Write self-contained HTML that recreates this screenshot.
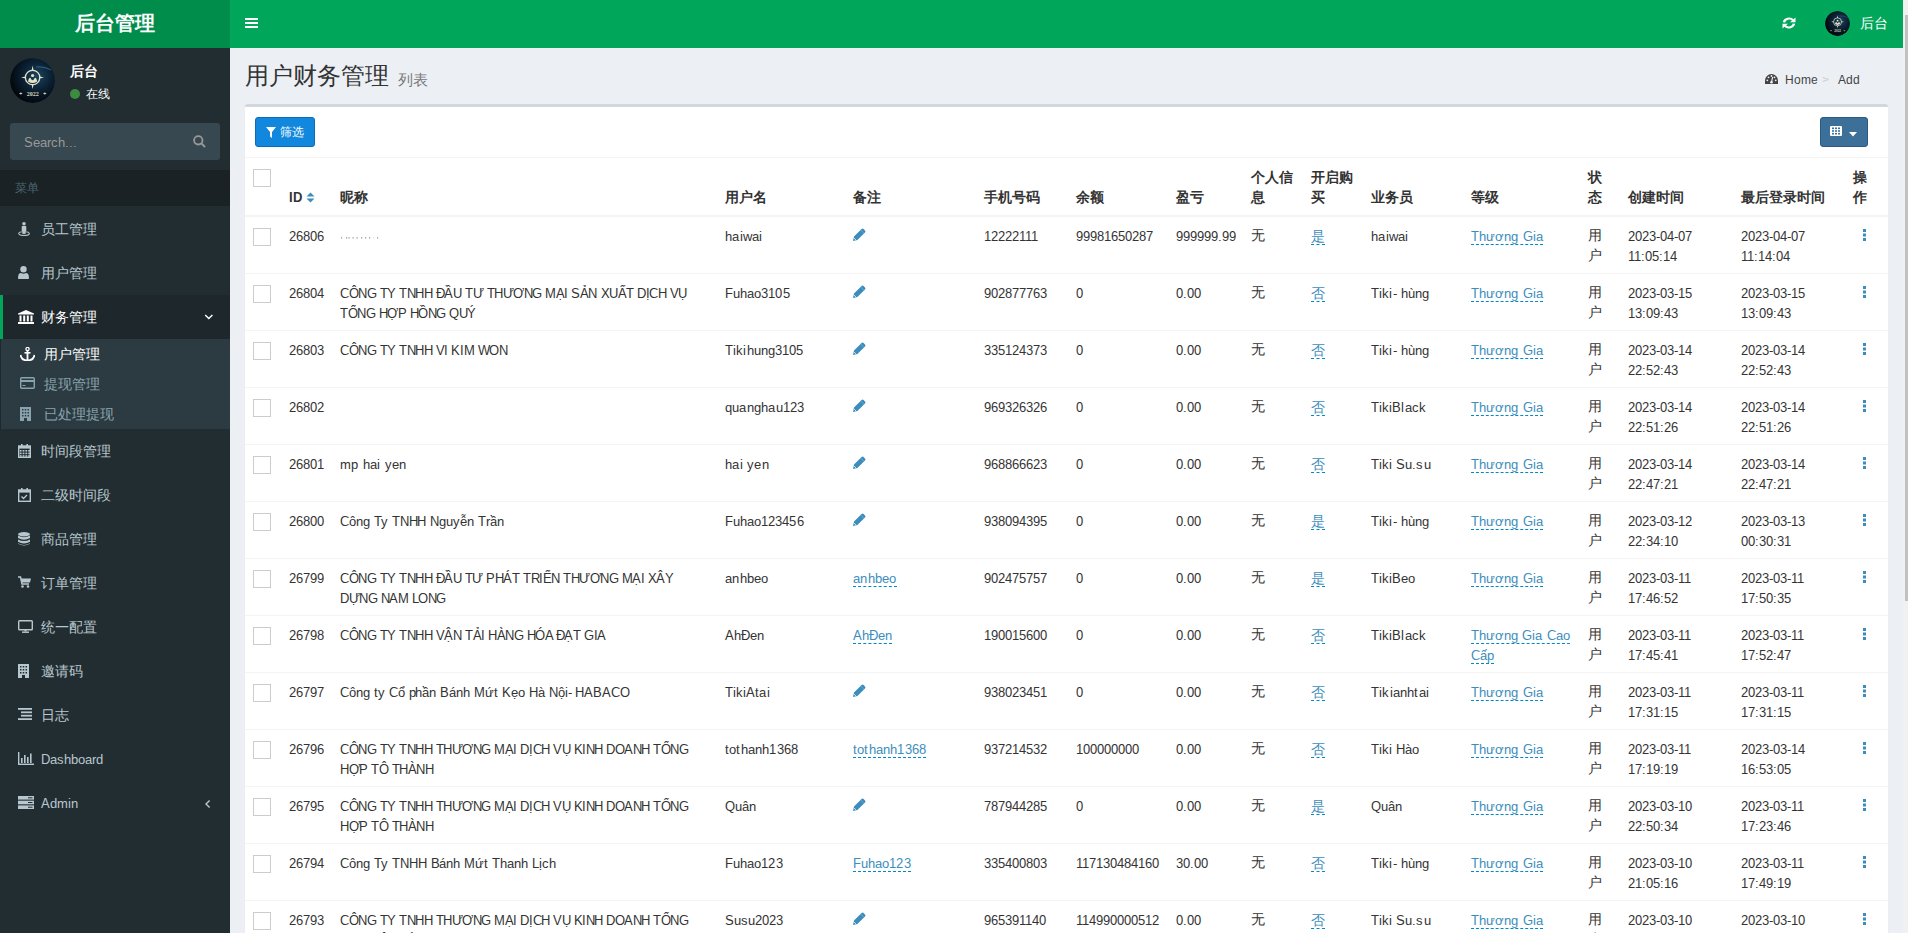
<!DOCTYPE html>
<html><head><meta charset="utf-8">
<style>
@font-face{font-family:"LSA";src:local("Liberation Sans");font-weight:400;size-adjust:90%;}
@font-face{font-family:"LSA";src:local("Liberation Sans Bold");font-weight:700;size-adjust:90%;}
html,body{margin:0;padding:0;width:1908px;height:933px;overflow:hidden;}
body{font-family:"LSA","Liberation Sans",sans-serif;font-size:14px;line-height:20px;color:#333;background:#ecf0f5;position:relative;}
a{text-decoration:none;}
.hdr-logo{position:absolute;left:0;top:0;width:230px;height:48px;background:#008d4c;color:#fff;font-size:20px;font-weight:bold;text-align:center;line-height:48px;}
.hdr-nav{position:absolute;left:230px;top:0;width:1673px;height:48px;background:#00a65a;}
.sb{position:absolute;left:0;top:48px;width:230px;height:885px;background:#222d32;}
.scroll{position:absolute;left:1903px;top:0;width:5px;height:933px;background:#f1f1f1;}
.thumb{position:absolute;left:2px;top:15px;width:3px;height:586px;background:#c1c1c1;}
.avatar{position:absolute;border-radius:50%;overflow:hidden;line-height:0;}
.uname{position:absolute;left:70px;top:60px;color:#fff;font-weight:bold;font-size:14px;}
.ustat{position:absolute;left:70px;top:83px;color:#fff;font-size:12px;}
.ustat i{display:inline-block;width:10px;height:10px;border-radius:50%;background:#3d8b40;vertical-align:-1px;margin-right:6px;}
.search{position:absolute;left:10px;top:123px;width:210px;height:37px;background:#374850;border-radius:3px;}
.search span{position:absolute;left:14px;top:10px;color:#999;font-size:14px;}
.sbh{position:absolute;left:0;top:170px;width:230px;height:36px;background:#1a2226;color:#4b646f;font-size:12px;line-height:36px;}
.sbh span{padding-left:15px;}
.mi{position:absolute;left:0;width:230px;height:44px;color:#b8c7ce;font-size:14px;line-height:44px;}
.mi .ic{position:absolute;left:18px;top:0;width:14px;height:44px;}
.mi .ic svg{position:absolute;left:0;top:15px;}
.mi .tx{position:absolute;left:41px;top:1px;}
.mi .tx.lat{top:1px;font-size:14.4px;}
.mi.act{background:#1e282c;color:#fff;border-left:3px solid #00a65a;width:227px;}
.mi.act .ic{left:15px}
.mi.act .tx{left:38px}
.tree{position:absolute;left:0;top:339px;width:230px;height:90px;background:#2c3b41;box-shadow:inset 1px 0 0 #1e282c;}
.si{position:absolute;left:0;width:230px;height:30px;line-height:30px;color:#8aa4af;font-size:14px;}
.si .ic{position:absolute;left:20px;top:0;width:16px;height:30px;}
.si .ic svg{position:absolute;left:0;top:8px;}
.si .tx{position:absolute;left:44px;top:1px;}
.si.act{color:#fff;}
.title{position:absolute;left:245px;top:62px;font-size:24px;line-height:30px;color:#333;}
.title small{font-size:15px;color:#777;padding-left:9px;position:relative;top:1px;}
.bc{position:absolute;left:1765px;top:71px;font-size:13px;line-height:17px;color:#444;}
.box{position:absolute;left:245px;top:104px;width:1643px;height:840px;background:#fff;border-top:3px solid #d2d6de;border-radius:3px;box-shadow:0 1px 1px rgba(0,0,0,.1);}
.btn1{position:absolute;left:10px;top:10px;width:58px;height:28px;background:#1188dd;border:1px solid #0a6db5;border-radius:3px;color:#fff;font-size:12px;line-height:28px;}
.btn2{position:absolute;left:1575px;top:10px;width:46px;height:28px;background:#3d7099;border:1px solid #2c5a80;border-radius:3px;}
table{position:absolute;left:0;top:50px;border-collapse:collapse;table-layout:fixed;width:1643px;}
td,th{padding:10px 8px 6px 8px;vertical-align:top;text-align:left;word-wrap:break-word;}
th{font-weight:bold;vertical-align:bottom;padding-bottom:7px;border-bottom:2px solid #f4f4f4;}
thead tr{border-top:1px solid #f4f4f4;}
tbody td{border-top:1px solid #f4f4f4;}
.cb{display:inline-block;width:16px;height:16px;border:1px solid #ccc;margin-top:1px;background:#fff;vertical-align:top;}
.ed{color:#3c8dbc;border-bottom:1px dashed #0088cc;}
.dots{color:#aab;font-size:10px;letter-spacing:-1px;}
.op{text-align:center;}
.up{position:relative;top:-1px;}
.op svg{margin-top:0px;position:relative;left:-3px;}
.pen{vertical-align:top;margin-top:1px;}
</style></head><body>
<div class="hdr-logo">后台管理</div>
<div class="hdr-nav">
  <svg style="position:absolute;left:15px;top:18px" width="13" height="10" viewBox="0 0 13 10"><rect x="0" y="0" width="13" height="2" fill="#fff"/><rect x="0" y="4" width="13" height="2" fill="#fff"/><rect x="0" y="8" width="13" height="2" fill="#fff"/></svg>
  <svg style="position:absolute;left:1552px;top:17px" width="14" height="12" viewBox="0 0 14 14" preserveAspectRatio="none"><path d="M2 6.3 A5.2 5.2 0 0 1 11 3.6" stroke="#fff" stroke-width="2.4" fill="none"/><path d="M13.5 0.5 L13.5 6 L8 6 Z" fill="#fff"/><path d="M12 7.7 A5.2 5.2 0 0 1 3 10.4" stroke="#fff" stroke-width="2.4" fill="none"/><path d="M0.5 13.5 L0.5 8 L6 8 Z" fill="#fff"/></svg>
  <div class="avatar" style="left:1595px;top:11px;width:25px;height:25px;"><svg width='25' height='25' viewBox='0 0 45 45'><defs><radialGradient id='agb' cx='60%' cy='40%' r='60%'><stop offset='0' stop-color='#1a4560'/><stop offset='0.5' stop-color='#0c2235'/><stop offset='1' stop-color='#03080e'/></radialGradient></defs><circle cx='22.5' cy='22.5' r='22.5' fill='url(#agb)'/><path d='M26 9 Q34 8 41 12' stroke='#3b6e8c' stroke-width='1.2' fill='none' opacity='0.7'/><circle cx='22.6' cy='19.5' r='7.2' fill='none' stroke='#e6e2c6' stroke-width='1.3'/><path d='M22.6 7.5 L23.6 12.5 L21.6 12.5 Z M22.6 31 L23.6 26.5 L21.6 26.5 Z M11 19.5 L15.5 18.5 L15.5 20.5 Z M34 19.5 L29.5 18.5 L29.5 20.5 Z' fill='#e6e2c6'/><path d='M18 23.5 Q19 19 20.5 20 Q22.6 24.5 24.7 20 Q26.2 19 27.2 23.5 Q22.6 26.5 18 23.5 Z' fill='#e6e2c6'/><circle cx='22.6' cy='17.5' r='1.6' fill='#e6e2c6'/><text x='22.8' y='37.5' text-anchor='middle' font-family='Liberation Serif' font-size='6' font-weight='bold' fill='#d8d4b8'>2022</text><path d='M9 35.5 L10.8 34.5 L12.6 35.5 L10.8 36.5 Z M33 35.5 L34.8 34.5 L36.6 35.5 L34.8 36.5 Z' fill='#d8d4b8'/></svg></div>
  <div style="position:absolute;left:1630px;top:14px;color:#fff;font-size:14px;">后台</div>
</div>
<div class="sb">
  <div class="avatar" style="left:10px;top:10px;width:45px;height:45px;"><svg width='45' height='45' viewBox='0 0 45 45'><defs><radialGradient id='aga' cx='60%' cy='40%' r='60%'><stop offset='0' stop-color='#1a4560'/><stop offset='0.5' stop-color='#0c2235'/><stop offset='1' stop-color='#03080e'/></radialGradient></defs><circle cx='22.5' cy='22.5' r='22.5' fill='url(#aga)'/><path d='M26 9 Q34 8 41 12' stroke='#3b6e8c' stroke-width='1.2' fill='none' opacity='0.7'/><circle cx='22.6' cy='19.5' r='7.2' fill='none' stroke='#e6e2c6' stroke-width='1.3'/><path d='M22.6 7.5 L23.6 12.5 L21.6 12.5 Z M22.6 31 L23.6 26.5 L21.6 26.5 Z M11 19.5 L15.5 18.5 L15.5 20.5 Z M34 19.5 L29.5 18.5 L29.5 20.5 Z' fill='#e6e2c6'/><path d='M18 23.5 Q19 19 20.5 20 Q22.6 24.5 24.7 20 Q26.2 19 27.2 23.5 Q22.6 26.5 18 23.5 Z' fill='#e6e2c6'/><circle cx='22.6' cy='17.5' r='1.6' fill='#e6e2c6'/><text x='22.8' y='37.5' text-anchor='middle' font-family='Liberation Serif' font-size='6' font-weight='bold' fill='#d8d4b8'>2022</text><path d='M9 35.5 L10.8 34.5 L12.6 35.5 L10.8 36.5 Z M33 35.5 L34.8 34.5 L36.6 35.5 L34.8 36.5 Z' fill='#d8d4b8'/></svg></div>
  <div class="uname" style="top:14px">后台</div>
  <div class="ustat" style="top:36px"><i></i>在线</div>
  <div class="search" style="top:75px"><span>Search...</span>
    <svg style="position:absolute;left:183px;top:12px" width="13" height="13" viewBox="0 0 13 13"><circle cx="5.3" cy="5.3" r="4.2" stroke="#999" stroke-width="1.8" fill="none"/><path d="M8.4 8.4 L12 12" stroke="#999" stroke-width="2"/></svg>
  </div>
  <div class="sbh" style="top:122px"><span>菜单</span></div>
  <div class='mi' style='top:159px'><span class='ic'><svg width='12' height='14' viewBox='0 0 12 14'><ellipse cx='6' cy='11.6' rx='5.3' ry='1.9' fill='none' stroke='#b8c7ce' stroke-width='1.1'/><circle cx='6' cy='1.8' r='1.8' fill='#b8c7ce'/><path d='M3.7 4.6 Q3.7 4 4.3 4 L7.7 4 Q8.3 4 8.3 4.6 L8.3 9 L7.5 9 L7.5 12 L4.5 12 L4.5 9 L3.7 9 Z' fill='#b8c7ce'/></svg></span><span class='tx'>员工管理</span></div>
<div class='mi' style='top:203px'><span class='ic'><svg width='11' height='13' viewBox='0 0 11 13'><circle cx='5.5' cy='3.3' r='3.2' fill='#b8c7ce'/><path d='M0 12.2 Q0 7 3 7 Q5.5 8.5 8 7 Q11 7 11 12.2 Q11 13 10.2 13 L0.8 13 Q0 13 0 12.2 Z' fill='#b8c7ce'/></svg></span><span class='tx'>用户管理</span></div>
<div class='mi' style='top:381px'><span class='ic'><svg width='13' height='14' viewBox='0 0 13 14'><rect x='0.7' y='2' width='11.6' height='11.3' fill='none' stroke='#b8c7ce' stroke-width='1.4'/><rect x='0.7' y='2' width='11.6' height='2.6' fill='#b8c7ce'/><rect x='3' y='0' width='1.6' height='3' fill='#b8c7ce'/><rect x='8.4' y='0' width='1.6' height='3' fill='#b8c7ce'/><rect x='1.8' y='6' width='1.8' height='1.6' fill='#b8c7ce'/><rect x='1.8' y='8.6' width='1.8' height='1.6' fill='#b8c7ce'/><rect x='1.8' y='11.2' width='1.8' height='1.6' fill='#b8c7ce'/><rect x='4.6' y='6' width='1.8' height='1.6' fill='#b8c7ce'/><rect x='4.6' y='8.6' width='1.8' height='1.6' fill='#b8c7ce'/><rect x='4.6' y='11.2' width='1.8' height='1.6' fill='#b8c7ce'/><rect x='7.4' y='6' width='1.8' height='1.6' fill='#b8c7ce'/><rect x='7.4' y='8.6' width='1.8' height='1.6' fill='#b8c7ce'/><rect x='7.4' y='11.2' width='1.8' height='1.6' fill='#b8c7ce'/><rect x='10.2' y='6' width='1.8' height='1.6' fill='#b8c7ce'/><rect x='10.2' y='8.6' width='1.8' height='1.6' fill='#b8c7ce'/><rect x='10.2' y='11.2' width='1.8' height='1.6' fill='#b8c7ce'/></svg></span><span class='tx'>时间段管理</span></div>
<div class='mi' style='top:425px'><span class='ic'><svg width='13' height='14' viewBox='0 0 13 14'><rect x='0.7' y='2' width='11.6' height='11.3' fill='none' stroke='#b8c7ce' stroke-width='1.4'/><rect x='0.7' y='2' width='11.6' height='2.6' fill='#b8c7ce'/><rect x='3' y='0' width='1.6' height='3' fill='#b8c7ce'/><rect x='8.4' y='0' width='1.6' height='3' fill='#b8c7ce'/><path d='M3.5 8.5 L5.5 10.5 L9 7' stroke='#b8c7ce' stroke-width='1.4' fill='none'/></svg></span><span class='tx'>二级时间段</span></div>
<div class='mi' style='top:469px'><span class='ic'><svg width='12' height='14' viewBox='0 0 12 14'><ellipse cx='6' cy='2.2' rx='6' ry='2.2' fill='#b8c7ce'/><path d='M0 3.6 Q6 7 12 3.6 L12 6 Q6 9.4 0 6 Z' fill='#b8c7ce'/><path d='M0 7.4 Q6 10.8 12 7.4 L12 9.8 Q6 13.2 0 9.8 Z' fill='#b8c7ce'/><path d='M0 11.2 Q6 14.6 12 11.2 L12 11.8 Q6 15 0 11.8 Z' fill='#b8c7ce'/></svg></span><span class='tx'>商品管理</span></div>
<div class='mi' style='top:513px'><span class='ic'><svg width='13' height='12' viewBox='0 0 13 12'><path d='M0 1 L2.5 1 L4 8 L11 8' fill='none' stroke='#b8c7ce' stroke-width='1.5'/><path d='M3 2.5 L13 2.5 L12 6.5 L3.8 6.5 Z' fill='#b8c7ce'/><circle cx='4.5' cy='10.5' r='1.3' fill='#b8c7ce'/><circle cx='10' cy='10.5' r='1.3' fill='#b8c7ce'/></svg></span><span class='tx'>订单管理</span></div>
<div class='mi' style='top:557px'><span class='ic'><svg width='15' height='13' viewBox='0 0 15 13'><rect x='0.7' y='0.7' width='13.6' height='9' rx='0.8' fill='none' stroke='#b8c7ce' stroke-width='1.4'/><rect x='6.5' y='9.5' width='2' height='2' fill='#b8c7ce'/><rect x='4' y='11.5' width='7' height='1.4' fill='#b8c7ce'/></svg></span><span class='tx'>统一配置</span></div>
<div class='mi' style='top:601px'><span class='ic'><svg width='11' height='14' viewBox='0 0 11 14'><rect x='0' y='0' width='11' height='14' fill='#b8c7ce'/><g fill='#222d32'><rect x='2' y='2' width='1.5' height='1.5'/><rect x='4.75' y='2' width='1.5' height='1.5'/><rect x='7.5' y='2' width='1.5' height='1.5'/><rect x='2' y='5' width='1.5' height='1.5'/><rect x='4.75' y='5' width='1.5' height='1.5'/><rect x='7.5' y='5' width='1.5' height='1.5'/><rect x='2' y='8' width='1.5' height='1.5'/><rect x='4.75' y='8' width='1.5' height='1.5'/><rect x='7.5' y='8' width='1.5' height='1.5'/><rect x='4' y='11' width='3' height='3'/></g></svg></span><span class='tx'>邀请码</span></div>
<div class='mi' style='top:645px'><span class='ic'><svg width='14' height='12' viewBox='0 0 14 12'><rect x='0' y='0' width='14' height='1.8' fill='#b8c7ce'/><rect x='3' y='3.4' width='11' height='1.8' fill='#b8c7ce'/><rect x='3' y='6.8' width='11' height='1.8' fill='#b8c7ce'/><rect x='0' y='10.2' width='14' height='1.8' fill='#b8c7ce'/></svg></span><span class='tx'>日志</span></div>
<div class='mi' style='top:689px'><span class='ic'><svg width='16' height='13' viewBox='0 0 16 13'><rect x='0' y='0' width='1.4' height='13' fill='#b8c7ce'/><rect x='0' y='11.6' width='16' height='1.4' fill='#b8c7ce'/><rect x='3' y='6' width='1.6' height='5' fill='#b8c7ce'/><rect x='6' y='3' width='1.6' height='8' fill='#b8c7ce'/><rect x='9' y='5' width='1.6' height='6' fill='#b8c7ce'/><rect x='12' y='1.5' width='1.6' height='9.5' fill='#b8c7ce'/></svg></span><span class='tx lat'>Dashboard</span></div>
<div class='mi' style='top:733px'><span class='ic'><svg width='16' height='13' viewBox='0 0 16 13'><rect x='0' y='0' width='16' height='3.6' fill='#b8c7ce'/><rect x='0' y='4.7' width='16' height='3.6' fill='#b8c7ce'/><rect x='0' y='9.4' width='16' height='3.6' fill='#b8c7ce'/><g fill='#222d32'><rect x='10' y='1.3' width='4.5' height='1'/><rect x='10' y='6' width='4.5' height='1'/><rect x='10' y='10.7' width='4.5' height='1'/></g></svg></span><span class='tx lat'>Admin</span><svg style='position:absolute;left:204px;top:18px' width='7' height='10' viewBox='0 0 7 10'><path d='M5.6 1.4 L2 5 L5.6 8.6' stroke='#b8c7ce' stroke-width='1.4' fill='none'/></svg></div>
<div class='mi act' style='top:247px'><span class='ic'><svg width='16' height='14' viewBox='0 0 16 14'><path d='M8 0 L16 3.5 L16 4.5 L0 4.5 L0 3.5 Z' fill='#fff'/><rect x='1.5' y='5.5' width='2' height='6' fill='#fff'/><rect x='5.2' y='5.5' width='2' height='6' fill='#fff'/><rect x='8.8' y='5.5' width='2' height='6' fill='#fff'/><rect x='12.5' y='5.5' width='2' height='6' fill='#fff'/><rect x='0' y='12' width='16' height='2' fill='#fff'/></svg></span><span class='tx'>财务管理</span><svg style='position:absolute;left:201px;top:19px' width='10' height='7' viewBox='0 0 10 7'><path d='M1.2 1 L4.8 4.6 L8.4 1' stroke='#fff' stroke-width='1.4' fill='none'/></svg></div>
<div class='tree' style='top:291px'><div class='si act' style='top:0px'><span class='ic'><svg width='15' height='14' viewBox='0 0 15 14'><circle cx='7.5' cy='2' r='1.6' fill='none' stroke='#fff' stroke-width='1.3'/><rect x='6.6' y='3.5' width='1.8' height='9.5' fill='#fff'/><rect x='4.5' y='5' width='6' height='1.6' fill='#fff'/><path d='M0.5 8 Q1.5 13.5 7.5 13.5 Q13.5 13.5 14.5 8' fill='none' stroke='#fff' stroke-width='1.8'/></svg></span><span class='tx'>用户管理</span></div><div class='si' style='top:30px'><span class='ic'><svg width='15' height='12' viewBox='0 0 15 12'><rect x='0.7' y='0.7' width='13.6' height='10.6' rx='1' fill='none' stroke='#8aa4af' stroke-width='1.4'/><rect x='0.7' y='3' width='13.6' height='2' fill='#8aa4af'/><rect x='2.5' y='8' width='3' height='1' fill='#8aa4af'/></svg></span><span class='tx'>提现管理</span></div><div class='si' style='top:60px'><span class='ic'><svg width='11' height='14' viewBox='0 0 11 14'><rect x='0' y='0' width='11' height='14' fill='#8aa4af'/><g fill='#2c3b41'><rect x='2' y='2' width='1.5' height='1.5'/><rect x='4.75' y='2' width='1.5' height='1.5'/><rect x='7.5' y='2' width='1.5' height='1.5'/><rect x='2' y='5' width='1.5' height='1.5'/><rect x='4.75' y='5' width='1.5' height='1.5'/><rect x='7.5' y='5' width='1.5' height='1.5'/><rect x='2' y='8' width='1.5' height='1.5'/><rect x='4.75' y='8' width='1.5' height='1.5'/><rect x='7.5' y='8' width='1.5' height='1.5'/><rect x='4' y='11' width='3' height='3'/></g></svg></span><span class='tx'>已处理提现</span></div></div>
</div>
<div class="title">用户财务管理<small>列表</small></div>
<div class="bc">
  <svg style="position:absolute;left:0;top:3px" width="13" height="10" viewBox="0 0 13 10"><path d="M6.5 0 A6.5 6.5 0 0 0 0 6.5 L0 10 L13 10 L13 6.5 A6.5 6.5 0 0 0 6.5 0 Z" fill="#444"/><g fill="#ecf0f5"><circle cx="2.3" cy="6.3" r="0.9"/><circle cx="3.5" cy="3.3" r="0.9"/><circle cx="6.5" cy="2" r="0.9"/><circle cx="10.7" cy="6.3" r="0.9"/><circle cx="9.5" cy="3.3" r="0.9"/></g><path d="M6.5 8.5 L7.6 3" stroke="#ecf0f5" stroke-width="1.2"/><circle cx="6.5" cy="8.2" r="1.3" fill="#ecf0f5"/></svg>
  <span style="position:absolute;left:20px;top:0">Home</span>
  <span style="position:absolute;left:57px;top:0;color:#ccc">&gt;</span>
  <span style="position:absolute;left:73px;top:0">Add</span>
</div>
<div class="box">
  <div class="btn1"><svg style="position:absolute;left:10px;top:9px" width="10" height="11" viewBox="0 0 10 11"><path d="M0 0 L10 0 L6 5 L6 11 L4 9.5 L4 5 Z" fill="#fff"/></svg><span style="position:absolute;left:24px;top:0">筛选</span></div>
  <div class="btn2"><svg style="position:absolute;left:9px;top:8px" width="12" height="10" viewBox="0 0 12 10"><rect x="0" y="0" width="12" height="10" rx="1" fill="#fff"/><g fill="#3d7099"><rect x="2" y="1.5" width="2" height="1.6"/><rect x="5" y="1.5" width="2" height="1.6"/><rect x="8" y="1.5" width="2" height="1.6"/><rect x="2" y="4.2" width="2" height="1.6"/><rect x="5" y="4.2" width="2" height="1.6"/><rect x="8" y="4.2" width="2" height="1.6"/><rect x="2" y="6.9" width="2" height="1.6"/><rect x="5" y="6.9" width="2" height="1.6"/><rect x="8" y="6.9" width="2" height="1.6"/></g></svg><svg style="position:absolute;left:28px;top:14px" width="8" height="5" viewBox="0 0 8 5"><path d="M0 0 L8 0 L4 4.5 Z" fill="#fff"/></svg></div>
  <table>
    <colgroup><col style='width:36px'><col style='width:51px'><col style='width:385px'><col style='width:128px'><col style='width:131px'><col style='width:92px'><col style='width:100px'><col style='width:75px'><col style='width:60px'><col style='width:60px'><col style='width:100px'><col style='width:117px'><col style='width:40px'><col style='width:113px'><col style='width:112px'><col style='width:43px'></colgroup>
    <thead><tr>
      <th style="vertical-align:top"><span class="cb"></span></th>
      <th>ID <svg width="9" height="11" viewBox="0 0 9 11" style="vertical-align:-1px"><path d="M0.5 4.5 L4.5 0.5 L8.5 4.5 Z" fill="#3c8dbc"/><path d="M0.5 6.5 L4.5 10.5 L8.5 6.5 Z" fill="#3c8dbc"/></svg></th>
      <th>昵称</th><th>用户名</th><th>备注</th><th>手机号码</th><th>余额</th><th>盈亏</th><th>个人信息</th><th>开启购买</th><th>业务员</th><th>等级</th><th>状态</th><th>创建时间</th><th>最后登录时间</th><th>操作</th>
    </tr></thead>
    <tbody>
<tr><td><span class='cb'></span></td><td>26806</td><td style='letter-spacing:0px'><svg width='40' height='14' style='vertical-align:top;margin-top:1px'><rect x='1' y='9' width='1.2' height='1.6' fill='#aaa'/><rect x='6' y='9' width='1.2' height='1.6' fill='#aaa'/><rect x='8.5' y='9' width='1.2' height='1.6' fill='#aaa'/><rect x='12.5' y='9' width='1.2' height='1.6' fill='#aaa'/><rect x='16.5' y='9' width='1.2' height='1.6' fill='#aaa'/><rect x='21' y='9' width='1.2' height='1.6' fill='#aaa'/><rect x='25' y='9' width='1.2' height='1.6' fill='#aaa'/><rect x='29' y='9' width='1.2' height='1.6' fill='#aaa'/><rect x='37' y='9' width='1.2' height='1.6' fill='#aaa'/><rect x='33' y='9' width='1' height='1' fill='#ddd'/></svg></td><td style='letter-spacing:0.3px'>haiwai</td><td><svg class='pen' width='13' height='13' viewBox='0 0 13 13'><path d='M0 13 L1 8.6 L8.6 1 Q9.6 0 10.6 1 L12 2.4 Q13 3.4 12 4.4 L4.4 12 Z' fill='#3c8dbc'/><path d='M7.6 2 L11 5.4' stroke='#8fbde0' stroke-width='0.6'/><path d='M1.2 10.2 L2.8 11.8' stroke='#fff' stroke-width='0.9'/></svg></td><td>12222111</td><td>99981650287</td><td style='white-space:nowrap'>999999.99</td><td class='cj'><span class='up'>无</span></td><td class='cj'><a class='ed'>是</a></td><td style='letter-spacing:0.3px'>haiwai</td><td style='letter-spacing:0.09px'><a class='ed'>Thương Gia</a></td><td class='cj'><span class='up'>用户</span></td><td>2023-04-07 11:05:14</td><td>2023-04-07 11:14:04</td><td class='op'><svg width='4' height='12' viewBox='0 0 4 12'><rect x='1' y='0' width='3' height='3' fill='#3c8dbc'/><rect x='1' y='4.5' width='3' height='3' fill='#3c8dbc'/><rect x='1' y='9' width='3' height='3' fill='#3c8dbc'/></svg></td></tr>
<tr><td><span class='cb'></span></td><td>26804</td><td style='letter-spacing:-0.471px'>CÔNG TY TNHH ĐẦU TƯ THƯƠNG MẠI SẢN XUẤT DỊCH VỤ TỔNG HỢP HỒNG QUÝ</td><td style='letter-spacing:0.067px'>Fuhao3105</td><td><svg class='pen' width='13' height='13' viewBox='0 0 13 13'><path d='M0 13 L1 8.6 L8.6 1 Q9.6 0 10.6 1 L12 2.4 Q13 3.4 12 4.4 L4.4 12 Z' fill='#3c8dbc'/><path d='M7.6 2 L11 5.4' stroke='#8fbde0' stroke-width='0.6'/><path d='M1.2 10.2 L2.8 11.8' stroke='#fff' stroke-width='0.9'/></svg></td><td>902877763</td><td>0</td><td style='white-space:nowrap'>0.00</td><td class='cj'><span class='up'>无</span></td><td class='cj'><a class='ed'>否</a></td><td style='letter-spacing:0.15px'>Tiki- hùng</td><td style='letter-spacing:0.09px'><a class='ed'>Thương Gia</a></td><td class='cj'><span class='up'>用户</span></td><td>2023-03-15 13:09:43</td><td>2023-03-15 13:09:43</td><td class='op'><svg width='4' height='12' viewBox='0 0 4 12'><rect x='1' y='0' width='3' height='3' fill='#3c8dbc'/><rect x='1' y='4.5' width='3' height='3' fill='#3c8dbc'/><rect x='1' y='9' width='3' height='3' fill='#3c8dbc'/></svg></td></tr>
<tr><td><span class='cb'></span></td><td>26803</td><td style='letter-spacing:-0.47px'>CÔNG TY TNHH VI KIM WON</td><td style='letter-spacing:0.125px'>Tikihung3105</td><td><svg class='pen' width='13' height='13' viewBox='0 0 13 13'><path d='M0 13 L1 8.6 L8.6 1 Q9.6 0 10.6 1 L12 2.4 Q13 3.4 12 4.4 L4.4 12 Z' fill='#3c8dbc'/><path d='M7.6 2 L11 5.4' stroke='#8fbde0' stroke-width='0.6'/><path d='M1.2 10.2 L2.8 11.8' stroke='#fff' stroke-width='0.9'/></svg></td><td>335124373</td><td>0</td><td style='white-space:nowrap'>0.00</td><td class='cj'><span class='up'>无</span></td><td class='cj'><a class='ed'>否</a></td><td style='letter-spacing:0.15px'>Tiki- hùng</td><td style='letter-spacing:0.09px'><a class='ed'>Thương Gia</a></td><td class='cj'><span class='up'>用户</span></td><td>2023-03-14 22:52:43</td><td>2023-03-14 22:52:43</td><td class='op'><svg width='4' height='12' viewBox='0 0 4 12'><rect x='1' y='0' width='3' height='3' fill='#3c8dbc'/><rect x='1' y='4.5' width='3' height='3' fill='#3c8dbc'/><rect x='1' y='9' width='3' height='3' fill='#3c8dbc'/></svg></td></tr>
<tr><td><span class='cb'></span></td><td>26802</td><td style='letter-spacing:0px'></td><td style='letter-spacing:0.218px'>quanghau123</td><td><svg class='pen' width='13' height='13' viewBox='0 0 13 13'><path d='M0 13 L1 8.6 L8.6 1 Q9.6 0 10.6 1 L12 2.4 Q13 3.4 12 4.4 L4.4 12 Z' fill='#3c8dbc'/><path d='M7.6 2 L11 5.4' stroke='#8fbde0' stroke-width='0.6'/><path d='M1.2 10.2 L2.8 11.8' stroke='#fff' stroke-width='0.9'/></svg></td><td>969326326</td><td>0</td><td style='white-space:nowrap'>0.00</td><td class='cj'><span class='up'>无</span></td><td class='cj'><a class='ed'>否</a></td><td style='letter-spacing:0.1px'>TikiBlack</td><td style='letter-spacing:0.09px'><a class='ed'>Thương Gia</a></td><td class='cj'><span class='up'>用户</span></td><td>2023-03-14 22:51:26</td><td>2023-03-14 22:51:26</td><td class='op'><svg width='4' height='12' viewBox='0 0 4 12'><rect x='1' y='0' width='3' height='3' fill='#3c8dbc'/><rect x='1' y='4.5' width='3' height='3' fill='#3c8dbc'/><rect x='1' y='9' width='3' height='3' fill='#3c8dbc'/></svg></td></tr>
<tr><td><span class='cb'></span></td><td>26801</td><td style='letter-spacing:0.24px'>mp hai yen</td><td style='letter-spacing:0.257px'>hai yen</td><td><svg class='pen' width='13' height='13' viewBox='0 0 13 13'><path d='M0 13 L1 8.6 L8.6 1 Q9.6 0 10.6 1 L12 2.4 Q13 3.4 12 4.4 L4.4 12 Z' fill='#3c8dbc'/><path d='M7.6 2 L11 5.4' stroke='#8fbde0' stroke-width='0.6'/><path d='M1.2 10.2 L2.8 11.8' stroke='#fff' stroke-width='0.9'/></svg></td><td>968866623</td><td>0</td><td style='white-space:nowrap'>0.00</td><td class='cj'><span class='up'>无</span></td><td class='cj'><a class='ed'>否</a></td><td style='letter-spacing:0.06px'>Tiki Su.su</td><td style='letter-spacing:0.09px'><a class='ed'>Thương Gia</a></td><td class='cj'><span class='up'>用户</span></td><td>2023-03-14 22:47:21</td><td>2023-03-14 22:47:21</td><td class='op'><svg width='4' height='12' viewBox='0 0 4 12'><rect x='1' y='0' width='3' height='3' fill='#3c8dbc'/><rect x='1' y='4.5' width='3' height='3' fill='#3c8dbc'/><rect x='1' y='9' width='3' height='3' fill='#3c8dbc'/></svg></td></tr>
<tr><td><span class='cb'></span></td><td>26800</td><td style='letter-spacing:-0.05px'>Công Ty TNHH Nguyễn Trần</td><td style='letter-spacing:0.055px'>Fuhao123456</td><td><svg class='pen' width='13' height='13' viewBox='0 0 13 13'><path d='M0 13 L1 8.6 L8.6 1 Q9.6 0 10.6 1 L12 2.4 Q13 3.4 12 4.4 L4.4 12 Z' fill='#3c8dbc'/><path d='M7.6 2 L11 5.4' stroke='#8fbde0' stroke-width='0.6'/><path d='M1.2 10.2 L2.8 11.8' stroke='#fff' stroke-width='0.9'/></svg></td><td>938094395</td><td>0</td><td style='white-space:nowrap'>0.00</td><td class='cj'><span class='up'>无</span></td><td class='cj'><a class='ed'>是</a></td><td style='letter-spacing:0.15px'>Tiki- hùng</td><td style='letter-spacing:0.09px'><a class='ed'>Thương Gia</a></td><td class='cj'><span class='up'>用户</span></td><td>2023-03-12 22:34:10</td><td>2023-03-13 00:30:31</td><td class='op'><svg width='4' height='12' viewBox='0 0 4 12'><rect x='1' y='0' width='3' height='3' fill='#3c8dbc'/><rect x='1' y='4.5' width='3' height='3' fill='#3c8dbc'/><rect x='1' y='9' width='3' height='3' fill='#3c8dbc'/></svg></td></tr>
<tr><td><span class='cb'></span></td><td>26799</td><td style='letter-spacing:-0.478px'>CÔNG TY TNHH ĐẦU TƯ PHÁT TRIỂN THƯƠNG MẠI XÂY DỰNG NAM LONG</td><td style='letter-spacing:0.3px'>anhbeo</td><td><a class='ed' style='letter-spacing:0.3px'>anhbeo</a></td><td>902475757</td><td>0</td><td style='white-space:nowrap'>0.00</td><td class='cj'><span class='up'>无</span></td><td class='cj'><a class='ed'>是</a></td><td style='letter-spacing:0.043px'>TikiBeo</td><td style='letter-spacing:0.09px'><a class='ed'>Thương Gia</a></td><td class='cj'><span class='up'>用户</span></td><td>2023-03-11 17:46:52</td><td>2023-03-11 17:50:35</td><td class='op'><svg width='4' height='12' viewBox='0 0 4 12'><rect x='1' y='0' width='3' height='3' fill='#3c8dbc'/><rect x='1' y='4.5' width='3' height='3' fill='#3c8dbc'/><rect x='1' y='9' width='3' height='3' fill='#3c8dbc'/></svg></td></tr>
<tr><td><span class='cb'></span></td><td>26798</td><td style='letter-spacing:-0.47px'>CÔNG TY TNHH VẬN TẢI HÀNG HÓA ĐẠT GIA</td><td style='letter-spacing:-0.06px'>AhĐen</td><td><a class='ed' style='letter-spacing:-0.06px'>AhĐen</a></td><td>190015600</td><td>0</td><td style='white-space:nowrap'>0.00</td><td class='cj'><span class='up'>无</span></td><td class='cj'><a class='ed'>否</a></td><td style='letter-spacing:0.1px'>TikiBlack</td><td style='letter-spacing:0.05px'><a class='ed'>Thương Gia Cao Cấp</a></td><td class='cj'><span class='up'>用户</span></td><td>2023-03-11 17:45:41</td><td>2023-03-11 17:52:47</td><td class='op'><svg width='4' height='12' viewBox='0 0 4 12'><rect x='1' y='0' width='3' height='3' fill='#3c8dbc'/><rect x='1' y='4.5' width='3' height='3' fill='#3c8dbc'/><rect x='1' y='9' width='3' height='3' fill='#3c8dbc'/></svg></td></tr>
<tr><td><span class='cb'></span></td><td>26797</td><td style='letter-spacing:-0.042px'>Công ty Cổ phần Bánh Mứt Kẹo Hà Nội- HABACO</td><td style='letter-spacing:0.075px'>TikiAtai</td><td><svg class='pen' width='13' height='13' viewBox='0 0 13 13'><path d='M0 13 L1 8.6 L8.6 1 Q9.6 0 10.6 1 L12 2.4 Q13 3.4 12 4.4 L4.4 12 Z' fill='#3c8dbc'/><path d='M7.6 2 L11 5.4' stroke='#8fbde0' stroke-width='0.6'/><path d='M1.2 10.2 L2.8 11.8' stroke='#fff' stroke-width='0.9'/></svg></td><td>938023451</td><td>0</td><td style='white-space:nowrap'>0.00</td><td class='cj'><span class='up'>无</span></td><td class='cj'><a class='ed'>否</a></td><td style='letter-spacing:0.21px'>Tikianhtai</td><td style='letter-spacing:0.09px'><a class='ed'>Thương Gia</a></td><td class='cj'><span class='up'>用户</span></td><td>2023-03-11 17:31:15</td><td>2023-03-11 17:31:15</td><td class='op'><svg width='4' height='12' viewBox='0 0 4 12'><rect x='1' y='0' width='3' height='3' fill='#3c8dbc'/><rect x='1' y='4.5' width='3' height='3' fill='#3c8dbc'/><rect x='1' y='9' width='3' height='3' fill='#3c8dbc'/></svg></td></tr>
<tr><td><span class='cb'></span></td><td>26796</td><td style='letter-spacing:-0.48px'>CÔNG TY TNHH THƯƠNG MẠI DỊCH VỤ KINH DOANH TỔNG HỢP TÔ THÀNH</td><td style='letter-spacing:0.191px'>tothanh1368</td><td><a class='ed' style='letter-spacing:0.191px'>tothanh1368</a></td><td>937214532</td><td>100000000</td><td style='white-space:nowrap'>0.00</td><td class='cj'><span class='up'>无</span></td><td class='cj'><a class='ed'>否</a></td><td style='letter-spacing:0.038px'>Tiki Hào</td><td style='letter-spacing:0.09px'><a class='ed'>Thương Gia</a></td><td class='cj'><span class='up'>用户</span></td><td>2023-03-11 17:19:19</td><td>2023-03-14 16:53:05</td><td class='op'><svg width='4' height='12' viewBox='0 0 4 12'><rect x='1' y='0' width='3' height='3' fill='#3c8dbc'/><rect x='1' y='4.5' width='3' height='3' fill='#3c8dbc'/><rect x='1' y='9' width='3' height='3' fill='#3c8dbc'/></svg></td></tr>
<tr><td><span class='cb'></span></td><td>26795</td><td style='letter-spacing:-0.48px'>CÔNG TY TNHH THƯƠNG MẠI DỊCH VỤ KINH DOANH TỔNG HỢP TÔ THÀNH</td><td style='letter-spacing:0.075px'>Quân</td><td><svg class='pen' width='13' height='13' viewBox='0 0 13 13'><path d='M0 13 L1 8.6 L8.6 1 Q9.6 0 10.6 1 L12 2.4 Q13 3.4 12 4.4 L4.4 12 Z' fill='#3c8dbc'/><path d='M7.6 2 L11 5.4' stroke='#8fbde0' stroke-width='0.6'/><path d='M1.2 10.2 L2.8 11.8' stroke='#fff' stroke-width='0.9'/></svg></td><td>787944285</td><td>0</td><td style='white-space:nowrap'>0.00</td><td class='cj'><span class='up'>无</span></td><td class='cj'><a class='ed'>是</a></td><td style='letter-spacing:0.075px'>Quân</td><td style='letter-spacing:0.09px'><a class='ed'>Thương Gia</a></td><td class='cj'><span class='up'>用户</span></td><td>2023-03-10 22:50:34</td><td>2023-03-11 17:23:46</td><td class='op'><svg width='4' height='12' viewBox='0 0 4 12'><rect x='1' y='0' width='3' height='3' fill='#3c8dbc'/><rect x='1' y='4.5' width='3' height='3' fill='#3c8dbc'/><rect x='1' y='9' width='3' height='3' fill='#3c8dbc'/></svg></td></tr>
<tr><td><span class='cb'></span></td><td>26794</td><td style='letter-spacing:-0.038px'>Công Ty TNHH Bánh Mứt Thanh Lịch</td><td style='letter-spacing:0.075px'>Fuhao123</td><td><a class='ed' style='letter-spacing:0.075px'>Fuhao123</a></td><td>335400803</td><td>117130484160</td><td style='white-space:nowrap'>30.00</td><td class='cj'><span class='up'>无</span></td><td class='cj'><a class='ed'>否</a></td><td style='letter-spacing:0.15px'>Tiki- hùng</td><td style='letter-spacing:0.09px'><a class='ed'>Thương Gia</a></td><td class='cj'><span class='up'>用户</span></td><td>2023-03-10 21:05:16</td><td>2023-03-11 17:49:19</td><td class='op'><svg width='4' height='12' viewBox='0 0 4 12'><rect x='1' y='0' width='3' height='3' fill='#3c8dbc'/><rect x='1' y='4.5' width='3' height='3' fill='#3c8dbc'/><rect x='1' y='9' width='3' height='3' fill='#3c8dbc'/></svg></td></tr>
<tr><td><span class='cb'></span></td><td>26793</td><td style='letter-spacing:-0.48px'>CÔNG TY TNHH THƯƠNG MẠI DỊCH VỤ KINH DOANH TỔNG HỢP TÔ THÀNH</td><td style='letter-spacing:0.037px'>Susu2023</td><td><svg class='pen' width='13' height='13' viewBox='0 0 13 13'><path d='M0 13 L1 8.6 L8.6 1 Q9.6 0 10.6 1 L12 2.4 Q13 3.4 12 4.4 L4.4 12 Z' fill='#3c8dbc'/><path d='M7.6 2 L11 5.4' stroke='#8fbde0' stroke-width='0.6'/><path d='M1.2 10.2 L2.8 11.8' stroke='#fff' stroke-width='0.9'/></svg></td><td>965391140</td><td>114990000512</td><td style='white-space:nowrap'>0.00</td><td class='cj'><span class='up'>无</span></td><td class='cj'><a class='ed'>否</a></td><td style='letter-spacing:0.06px'>Tiki Su.su</td><td style='letter-spacing:0.09px'><a class='ed'>Thương Gia</a></td><td class='cj'><span class='up'>用户</span></td><td>2023-03-10 20:41:37</td><td>2023-03-10 20:41:37</td><td class='op'><svg width='4' height='12' viewBox='0 0 4 12'><rect x='1' y='0' width='3' height='3' fill='#3c8dbc'/><rect x='1' y='4.5' width='3' height='3' fill='#3c8dbc'/><rect x='1' y='9' width='3' height='3' fill='#3c8dbc'/></svg></td></tr>
    </tbody>
  </table>
</div>
<div class="scroll"><div class="thumb"></div></div>
</body></html>
